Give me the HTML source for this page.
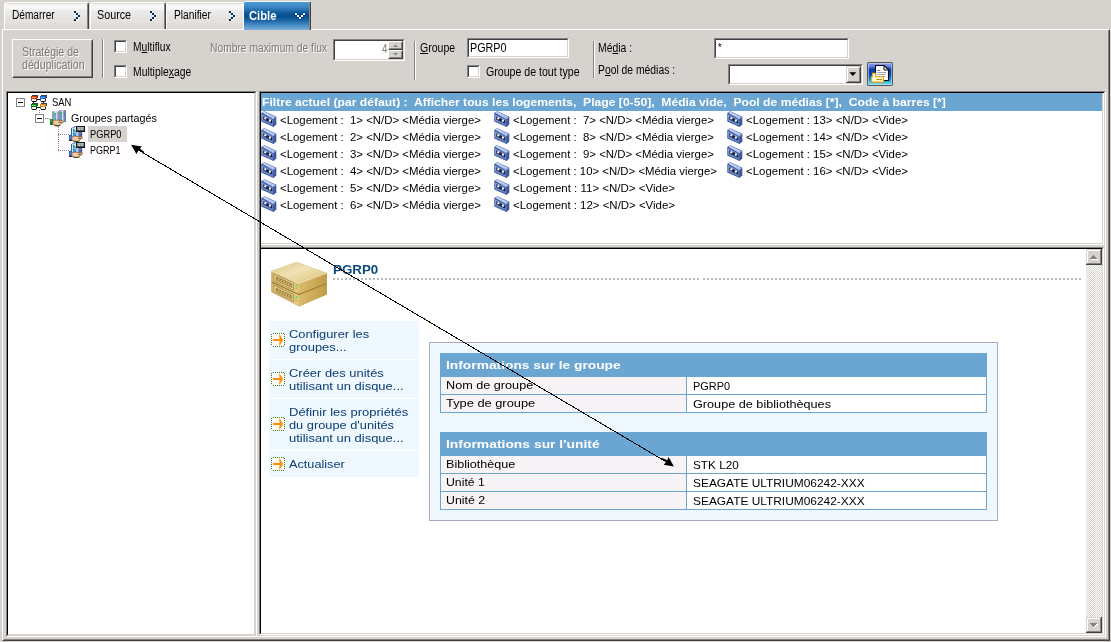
<!DOCTYPE html>
<html>
<head>
<meta charset="utf-8">
<title>Cible</title>
<style>
html,body{margin:0;padding:0;}
body{width:1111px;height:642px;overflow:hidden;background:#d6d3ce;font-family:"Liberation Sans",sans-serif;font-size:11px;color:#000;position:relative;}
#root{position:absolute;left:0;top:0;width:1111px;height:642px;will-change:transform;}
.a{position:absolute;}
.t{position:absolute;white-space:pre;display:block;transform-origin:0 0;}
u{text-decoration:underline;}
.tab{position:absolute;top:2px;height:27px;box-sizing:border-box;border-left:1px solid #fff;border-top:1px solid #fff;border-right:1px solid #424142;border-radius:3px 3px 0 0;background:linear-gradient(#dcd9d5 0,#dcd9d5 3.8%,#f6f6f6 3.9%,#f6f6f6 21%,#f2efed 25%,#ececec 29%,#e8e7e7 45%,#ebe6e3 48%,#e5e4e4 54%,#e6e3df 62%,#e5e2de 75%,#dfdcd7 80%,#dedbd6 95%,#d9d6d1 100%);}
.tab:after{content:"";position:absolute;right:0;top:1px;bottom:0;width:1px;background:#848284;}
.tabl{border-right-color:#fff;}.tabl:after{display:none;}
.sunk{position:absolute;box-sizing:border-box;border:1px solid;border-color:#848284 #fff #fff #848284;}
.sunk>i{position:absolute;left:0;top:0;right:0;bottom:0;border:1px solid;border-color:#424142 #d6d3ce #d6d3ce #424142;background:#fff;display:block;}
.pane>i{border-top-color:#000;border-left-color:#000;}
.cb{position:absolute;width:13px;height:13px;box-sizing:border-box;border:1px solid;border-color:#848284 #fff #fff #848284;}
.cb>i{position:absolute;left:0;top:0;right:0;bottom:0;border:1px solid;border-color:#424142 #d6d3ce #d6d3ce #424142;background:#fff;display:block;}
.vsep{position:absolute;width:1px;background:#848284;border-right:1px solid #fff;}
</style>
</head>
<body>
<div id="root">
<svg width="0" height="0" style="position:absolute">
<defs>
<linearGradient id="gTapeTop" x1="0" y1="0" x2="1" y2="1"><stop offset="0" stop-color="#b9ccf4"/><stop offset="1" stop-color="#98b0e6"/></linearGradient>
<linearGradient id="gTapeFront" x1="0" y1="0" x2="0" y2="1"><stop offset="0" stop-color="#86a2e0"/><stop offset="1" stop-color="#5a7ac0"/></linearGradient>
<linearGradient id="gDiskTop" x1="0" y1="0" x2="1" y2="1"><stop offset="0" stop-color="#dcc88c"/><stop offset=".45" stop-color="#efe2b4"/><stop offset="1" stop-color="#d9bf76"/></linearGradient>
<linearGradient id="gDiskL" x1="0" y1="0" x2="1" y2="0"><stop offset="0" stop-color="#d2b466"/><stop offset="1" stop-color="#e3cb88"/></linearGradient>
<linearGradient id="gDiskR" x1="0" y1="0" x2="1" y2="0"><stop offset="0" stop-color="#d9bb6c"/><stop offset="1" stop-color="#c19c48"/></linearGradient>
<linearGradient id="gBtn" x1="0" y1="0" x2="0" y2="1"><stop offset="0" stop-color="#92a4f4"/><stop offset=".16" stop-color="#6a82e6"/><stop offset=".3" stop-color="#0c3cb0"/><stop offset=".5" stop-color="#0840b2"/><stop offset=".66" stop-color="#1270c8"/><stop offset=".84" stop-color="#30b4e0"/><stop offset="1" stop-color="#90ecfc"/></linearGradient>
<linearGradient id="gTower" x1="0" y1="0" x2="1" y2="0"><stop offset="0" stop-color="#6a7aaa"/><stop offset=".3" stop-color="#a4b0d2"/><stop offset=".55" stop-color="#eef0fc"/><stop offset=".72" stop-color="#b0bcd8"/><stop offset="1" stop-color="#7080b0"/></linearGradient>
<pattern id="chk" width="2" height="2" patternUnits="userSpaceOnUse"><rect width="2" height="2" fill="#fff"/><rect width="1" height="1" fill="#d6d3ce"/><rect x="1" y="1" width="1" height="1" fill="#d6d3ce"/></pattern>
</defs></svg>
<div class="a" style="left:2px;top:29px;width:1108px;height:612px;box-sizing:border-box;border:1px solid;border-color:#fff #424142 #424142 #fff;"></div>
<div class="a" style="left:3px;top:30px;width:1106px;height:610px;box-sizing:border-box;border:1px solid;border-color:#d6d3ce #848284 #848284 #d6d3ce;"></div>
<div class="tab" style="left:4px;width:85px;"></div>
<div class="tab" style="left:90px;width:76px;"></div>
<div class="tab tabl" style="left:166px;width:78px;"></div>
<svg class="a" style="left:74px;top:11px" width="6" height="10" viewBox="0 0 6 10" shape-rendering="crispEdges"><g fill="#fff" opacity=".6"><rect x="0" y="0" width="3" height="3"/><rect x="2" y="2" width="3" height="3"/><rect x="4" y="4" width="2" height="3"/><rect x="2" y="6" width="3" height="3"/><rect x="0" y="8" width="3" height="2"/></g><g fill="#002f60"><rect x="0" y="0" width="2" height="2"/><rect x="2" y="2" width="2" height="2"/><rect x="4" y="4" width="2" height="2"/><rect x="2" y="6" width="2" height="2"/><rect x="0" y="8" width="2" height="2"/></g></svg>
<svg class="a" style="left:150px;top:11px" width="6" height="10" viewBox="0 0 6 10" shape-rendering="crispEdges"><g fill="#fff" opacity=".6"><rect x="0" y="0" width="3" height="3"/><rect x="2" y="2" width="3" height="3"/><rect x="4" y="4" width="2" height="3"/><rect x="2" y="6" width="3" height="3"/><rect x="0" y="8" width="3" height="2"/></g><g fill="#002f60"><rect x="0" y="0" width="2" height="2"/><rect x="2" y="2" width="2" height="2"/><rect x="4" y="4" width="2" height="2"/><rect x="2" y="6" width="2" height="2"/><rect x="0" y="8" width="2" height="2"/></g></svg>
<svg class="a" style="left:229px;top:11px" width="6" height="10" viewBox="0 0 6 10" shape-rendering="crispEdges"><g fill="#fff" opacity=".6"><rect x="0" y="0" width="3" height="3"/><rect x="2" y="2" width="3" height="3"/><rect x="4" y="4" width="2" height="3"/><rect x="2" y="6" width="3" height="3"/><rect x="0" y="8" width="3" height="2"/></g><g fill="#002f60"><rect x="0" y="0" width="2" height="2"/><rect x="2" y="2" width="2" height="2"/><rect x="4" y="4" width="2" height="2"/><rect x="2" y="6" width="2" height="2"/><rect x="0" y="8" width="2" height="2"/></g></svg>
<span class="t" style="left:12.2px;top:8.84px;font-size:12px;line-height:12px;height:12px;color:#000;transform:scaleX(0.8427);">Démarrer</span>
<span class="t" style="left:97.3px;top:8.84px;font-size:12px;line-height:12px;height:12px;color:#000;transform:scaleX(0.8966);">Source</span>
<span class="t" style="left:173.5px;top:8.84px;font-size:12px;line-height:12px;height:12px;color:#000;transform:scaleX(0.8487);">Planifier</span>
<div class="a" style="left:244px;top:1px;width:67px;height:29px;box-sizing:border-box;border-top:1px solid #eef4fa;border-right:1px solid #424142;border-radius:2px 2px 0 0;background:linear-gradient(#4c9cd6 0%,#3a86c4 18%,#0c5494 42%,#07508f 52%,#1c66a6 66%,#4a8fc8 84%,#7fb0da 100%);"><div class="a" style="right:0;top:1px;bottom:0;width:1px;background:#8a8286;"></div></div>
<span class="t" style="left:248.7px;top:10.42px;font-size:12.5px;line-height:12.5px;height:12.5px;color:#fff;font-weight:bold;transform:scaleX(0.8998);">Cible</span>
<svg class="a" style="left:294px;top:12px" width="12" height="8" viewBox="0 0 12 8" shape-rendering="crispEdges"><g fill="#003470" opacity=".55"><rect x="0" y="0" width="4" height="4"/><rect x="2" y="2" width="4" height="4"/><rect x="4" y="4" width="4" height="4"/><rect x="6" y="2" width="4" height="4"/><rect x="8" y="0" width="4" height="4"/></g><g fill="#fff"><rect x="1" y="1" width="2" height="2"/><rect x="3" y="3" width="2" height="2"/><rect x="5" y="5" width="2" height="2"/><rect x="7" y="3" width="2" height="2"/><rect x="9" y="1" width="2" height="2"/></g></svg>
<div class="a" style="left:12px;top:39px;width:81px;height:39px;box-sizing:border-box;border:1px solid;border-color:#fff #424142 #424142 #fff;"></div>
<div class="a" style="left:13px;top:40px;width:79px;height:37px;box-sizing:border-box;border:1px solid;border-color:#d6d3ce #848284 #848284 #d6d3ce;"></div>
<span class="t" style="left:21.6px;top:45.84px;font-size:12px;line-height:12px;height:12px;color:#7b797b;text-shadow:1px 1px 0 #fff;transform:scaleX(0.8792);">Stratégie de</span>
<span class="t" style="left:21.6px;top:58.84px;font-size:12px;line-height:12px;height:12px;color:#7b797b;text-shadow:1px 1px 0 #fff;transform:scaleX(0.8864);">déduplication</span>
<div class="vsep" style="left:102px;top:39px;height:39px;"></div>
<div class="cb" style="left:114px;top:40px;"><i></i></div>
<div class="cb" style="left:114px;top:65px;"><i></i></div>
<span class="t" style="left:132.6px;top:40.84px;font-size:12px;line-height:12px;height:12px;color:#000;transform:scaleX(0.8562);">M<u>u</u>ltiflux</span>
<span class="t" style="left:132.6px;top:65.84px;font-size:12px;line-height:12px;height:12px;color:#000;transform:scaleX(0.8636);">Multiple<u>x</u>age</span>
<span class="t" style="left:209.6px;top:41.84px;font-size:12px;line-height:12px;height:12px;color:#7b797b;text-shadow:1px 1px 0 #fff;transform:scaleX(0.8565);">Nombre maximum de flux</span>
<div class="sunk" style="left:333px;top:39px;width:72px;height:22px;"><i></i></div>
<span class="t" style="left:381.6px;top:42.84px;font-size:12px;line-height:12px;height:12px;color:#7b797b;transform:scaleX(0.8075);">4</span>
<div class="a" style="left:388px;top:41px;width:15px;height:9px;box-sizing:border-box;background:#d6d3ce;border:1px solid;border-color:#fff #424142 #424142 #fff;"></div>
<div class="a" style="left:389px;top:42px;width:13px;height:7px;box-sizing:border-box;border:1px solid;border-color:#d6d3ce #848284 #848284 #d6d3ce;"></div>
<svg class="a" style="left:393px;top:44px" width="6" height="4" viewBox="0 0 6 4"><polygon points="0,3 5,3 2.5,0.4" fill="#848284"/></svg>
<div class="a" style="left:388px;top:50px;width:15px;height:9px;box-sizing:border-box;background:#d6d3ce;border:1px solid;border-color:#fff #424142 #424142 #fff;"></div>
<div class="a" style="left:389px;top:51px;width:13px;height:7px;box-sizing:border-box;border:1px solid;border-color:#d6d3ce #848284 #848284 #d6d3ce;"></div>
<svg class="a" style="left:393px;top:53px" width="6" height="4" viewBox="0 0 6 4"><polygon points="0,0 5,0 2.5,2.6" fill="#848284"/></svg>
<div class="vsep" style="left:414px;top:41px;height:39px;"></div>
<span class="t" style="left:420.4px;top:41.84px;font-size:12px;line-height:12px;height:12px;color:#000;transform:scaleX(0.8765);"><u>G</u>roupe</span>
<div class="sunk" style="left:467px;top:38px;width:102px;height:20px;"><i></i></div>
<span class="t" style="left:470.0px;top:41.84px;font-size:12px;line-height:12px;height:12px;color:#000;transform:scaleX(0.8971);">PGRP0</span>
<div class="cb" style="left:467px;top:65px;"><i></i></div>
<span class="t" style="left:486.0px;top:65.84px;font-size:12px;line-height:12px;height:12px;color:#000;transform:scaleX(0.8824);">Groupe de tout type</span>
<div class="vsep" style="left:593px;top:41px;height:37px;"></div>
<span class="t" style="left:597.5px;top:41.84px;font-size:12px;line-height:12px;height:12px;color:#000;transform:scaleX(0.8660);">Mé<u>d</u>ia :</span>
<span class="t" style="left:597.5px;top:63.84px;font-size:12px;line-height:12px;height:12px;color:#000;transform:scaleX(0.8622);">P<u>o</u>ol de médias :</span>
<div class="sunk" style="left:714px;top:38px;width:135px;height:21px;"><i></i></div>
<span class="t" style="left:717.8px;top:41.69px;font-size:11px;line-height:11px;height:11px;color:#000;transform:scaleX(0.8409);">*</span>
<div class="sunk" style="left:728px;top:64px;width:135px;height:21px;"><i></i></div>
<div class="a" style="left:846px;top:66px;width:15px;height:17px;box-sizing:border-box;background:#d6d3ce;border:1px solid;border-color:#d6d3ce #424142 #424142 #d6d3ce;"></div>
<div class="a" style="left:847px;top:67px;width:13px;height:15px;box-sizing:border-box;border:1px solid;border-color:#fff #848284 #848284 #fff;"></div>
<svg class="a" style="left:849px;top:72px" width="8" height="5" viewBox="0 0 8 5"><polygon points="0.3,0.3 7.3,0.3 3.8,4" fill="#000"/></svg>
<svg class="a" style="left:867px;top:62px;" width="26" height="24" viewBox="0 0 26 24"><rect x="0.5" y="0.5" width="25" height="23" rx="1.6" fill="url(#gBtn)" stroke="#56564e"/><rect x="0" y="0" width="1" height="1" fill="#8a94b8"/><rect x="25" y="0" width="1" height="1" fill="#8a94b8"/><rect x="0" y="23" width="1" height="1" fill="#8a94b8"/><rect x="25" y="23" width="1" height="1" fill="#8a94b8"/><rect x="1.5" y="1.5" width="23" height="21" rx="1" fill="none" stroke="#c8ecff" stroke-width="1" opacity=".55"/><path d="M8.5,3.5 H17.2 L21.5,7.8 V18.5 H8.5 Z" fill="#fff" stroke="#0a0a0a" stroke-width="1.1"/><path d="M17,3.8 V8 H21.2" fill="none" stroke="#0a0a0a" stroke-width="1"/><path d="M10.4,8.5 H13.2" stroke="#70747c" stroke-width="1"/><path d="M10.4,10.5 H18.6 M10.4,12.5 H18.6 M10.4,14.5 H18.6" stroke="#9a9ca4" stroke-width="0.9"/><rect x="17.8" y="10" width="1.2" height="1" fill="#c08a28"/><path d="M5.5,11.2 H8.7 V14.7 H16.5 V20.1 H4.6 V14.7 H5.5 Z" fill="#fff3cc" stroke="#f2a416" stroke-width="1.15" stroke-linejoin="round"/><rect x="6" y="15.8" width="3" height="3.2" fill="#fff"/><rect x="6.6" y="12" width="1" height="2.6" fill="#fff"/><path d="M9.2,17.5 H15" stroke="#c4860c" stroke-width="1"/></svg>
<div class="sunk pane" style="left:6px;top:91px;width:251px;height:546px;"><i style="border-right-width:2px;border-bottom-width:2px;"></i></div>
<div class="a" style="left:257px;top:636px;width:849px;height:1px;background:#fff;"></div>
<div class="a" style="left:1105px;top:92px;width:1px;height:545px;background:#fff;"></div>
<div class="a" style="left:55px;top:126px;width:73px;height:33px;background:#fffbff;"></div>
<div class="a" style="left:88px;top:126px;width:39px;height:16px;background:#d6d3ce;"></div>
<div class="a" style="left:130px;top:143px;width:13px;height:13px;background:#fffbff;"></div>
<div class="a" style="left:39px;top:110px;width:1px;height:3px;background-image:linear-gradient(180deg,#848284 50%,transparent 50%);background-size:1px 2px;"></div>
<div class="a" style="left:45px;top:118px;width:5px;height:1px;background-image:linear-gradient(90deg,#848284 50%,transparent 50%);background-size:2px 1px;"></div>
<div class="a" style="left:58px;top:127px;width:1px;height:24px;background-image:linear-gradient(180deg,#848284 50%,transparent 50%);background-size:1px 2px;"></div>
<div class="a" style="left:58px;top:134px;width:11px;height:1px;background-image:linear-gradient(90deg,#848284 50%,transparent 50%);background-size:2px 1px;"></div>
<div class="a" style="left:58px;top:150px;width:11px;height:1px;background-image:linear-gradient(90deg,#848284 50%,transparent 50%);background-size:2px 1px;"></div>
<svg class="a" style="left:16px;top:98px;shape-rendering:crispEdges;" width="9" height="9" viewBox="0 0 9 9"><rect x="0.5" y="0.5" width="8" height="8" fill="#fff" stroke="#848284"/><rect x="2" y="4" width="5" height="1" fill="#000"/></svg>
<svg class="a" style="left:35px;top:114px;shape-rendering:crispEdges;" width="9" height="9" viewBox="0 0 9 9"><rect x="0.5" y="0.5" width="8" height="8" fill="#fff" stroke="#848284"/><rect x="2" y="4" width="5" height="1" fill="#000"/></svg>
<svg class="a" style="left:31px;top:95px;" width="17" height="16" viewBox="0 0 17 16"><path d="M6,4.5 H9 M6,12.5 H9 M2.6,7 V9 M12.4,7 V9" stroke="#111" stroke-width="1" fill="none"/><rect x="1" y="0" width="6" height="3" fill="#3a4446"/><rect x="0" y="1" width="6" height="3" fill="#dc2c08"/><rect x="1" y="2" width="3.6" height="1" fill="#ffb040"/><rect x="0" y="4" width="6" height="2" fill="#fff"/><rect x="0" y="4" width="1" height="2" fill="#4a5cc4"/><rect x="5" y="4" width="1" height="2" fill="#222"/><rect x="1" y="6" width="4.4" height="1" fill="#111"/><rect x="10" y="0" width="6" height="3" fill="#3a4446"/><rect x="9" y="1" width="6" height="3" fill="#1c5cc8"/><rect x="10" y="2" width="3.6" height="1" fill="#7ca4f0"/><rect x="9" y="4" width="6" height="2" fill="#fff"/><rect x="9" y="4" width="1" height="2" fill="#4a5cc4"/><rect x="14" y="4" width="1" height="2" fill="#222"/><rect x="10" y="6" width="4.4" height="1" fill="#111"/><rect x="1" y="8" width="6" height="3" fill="#3a4446"/><rect x="0" y="9" width="6" height="3" fill="#0a7a12"/><rect x="1" y="10" width="3.6" height="1" fill="#60f060"/><rect x="0" y="12" width="6" height="2" fill="#fff"/><rect x="0" y="12" width="1" height="2" fill="#4a5cc4"/><rect x="5" y="12" width="1" height="2" fill="#222"/><rect x="1" y="14" width="4.4" height="1" fill="#111"/><rect x="10" y="8" width="6" height="3" fill="#3a4446"/><rect x="9" y="9" width="6" height="3" fill="#dc8c14"/><rect x="10" y="10" width="3.6" height="1" fill="#ffd070"/><rect x="9" y="12" width="6" height="2" fill="#fff"/><rect x="9" y="12" width="1" height="2" fill="#4a5cc4"/><rect x="14" y="12" width="1" height="2" fill="#222"/><rect x="10" y="14" width="4.4" height="1" fill="#111"/></svg>
<svg class="a" style="left:50px;top:110px;" width="17" height="17" viewBox="0 0 17 17"><rect x="2.2" y="1.2" width="7" height="10.4" rx="0.9" fill="url(#gTower)"/><rect x="9.1" y="0.1" width="6.9" height="12" rx="0.9" fill="url(#gTower)"/><rect x="13.4" y="0.6" width="2.6" height="11.3" fill="#6474a8" opacity=".8"/><rect x="4" y="3" width="2.2" height="1.3" fill="#18d828"/><rect x="10" y="2" width="2.3" height="1.3" fill="#18d828"/><rect x="4.4" y="4.4" width="1.4" height="0.8" fill="#584878"/><rect x="10.4" y="3.4" width="1.4" height="0.8" fill="#584878"/><rect x="4.7" y="5.4" width="1" height="5" fill="#2a9ab4"/><rect x="10.7" y="4.6" width="1" height="6.6" fill="#2a9ab4"/><rect x="0" y="9" width="2.9" height="6" fill="#0e7a18"/><rect x="0.3" y="9.2" width="1.8" height="2.4" fill="#22c030"/><path d="M2.9,10.6 C5,9.8 8,10.2 11,10.4 C12.6,10.6 13.4,11.2 13.2,12.2 C12.6,13 11.6,13 11,13.6 C10.4,15 8.6,16 6.4,15.6 C4.8,15.2 3.8,14.6 2.9,14.4 Z" fill="#f6d0b4" stroke="#8a5a18" stroke-width="0.8"/><path d="M4.4,15.2 C6.2,16.2 8.8,16.2 10.2,15" stroke="#111" stroke-width="0.9" fill="none"/><path d="M8.6,12.2 H11.6" stroke="#3a2a10" stroke-width="0.9"/><path d="M5.4,14.2 C6.8,14.8 8.4,14.6 9.4,14" stroke="#e0d848" stroke-width="0.8" fill="none"/><path d="M4,12.6 C5,13.4 6.6,13.4 7.6,13" stroke="#f8a0a8" stroke-width="0.9" fill="none"/></svg>
<svg class="a" style="left:69px;top:126px;" width="17" height="16" viewBox="0 0 17 16"><polygon points="2,2.2 6.2,0 7,0.9 3.3,2.8 3.3,10.6 2,10.6" fill="#1a58c4"/><rect x="3.3" y="1.6" width="4.4" height="8.6" fill="#dcecfc"/><rect x="4" y="2.8" width="1.5" height="1.2" fill="#18c828"/><rect x="4.4" y="4" width="1.3" height="0.9" fill="#111"/><rect x="4" y="5.2" width="3.6" height="4.8" fill="#3a92b2"/><rect x="4.6" y="6" width="2.6" height="0.8" fill="#9cd4ec"/><rect x="4.6" y="7.6" width="2.6" height="0.8" fill="#6cb4d4"/><rect x="7.6" y="6.2" width="1.9" height="4.4" fill="#a8dcf8"/><rect x="9.4" y="6.2" width="3.8" height="6.6" fill="#484e98"/><rect x="10.4" y="6.6" width="1" height="6" fill="#7a84c4"/><rect x="0" y="9" width="2.9" height="5.8" fill="#1a5ac6"/><rect x="0.6" y="9.8" width="1.5" height="3.2" fill="#3e8ae6"/><rect x="0" y="14" width="2.9" height="0.9" fill="#0a1230"/><path d="M2.9,10.8 C5,10 8,10.4 11,10.6 C12.6,10.8 13.6,11.4 13.4,12.2 C12.8,13 11.8,13 11.2,13.4 C10.6,14.6 8.8,15.4 6.4,15.2 C4.8,15 3.8,14.6 2.9,14.4 Z" fill="#f8d4b8" stroke="#8a5612" stroke-width="0.8"/><path d="M4.2,15 C6,15.7 9,15.7 10.6,14.6" stroke="#151515" stroke-width="0.8" fill="none"/><path d="M8.8,12.2 H11.8" stroke="#3a2a10" stroke-width="0.9"/><path d="M5.2,14.2 C6.6,14.7 8.4,14.6 9.6,14" stroke="#e8e040" stroke-width="0.8" fill="none"/><path d="M4,12.6 C5,13.3 6.6,13.3 7.6,13" stroke="#f8a0a8" stroke-width="0.9" fill="none"/><rect x="7" y="0" width="9" height="6" fill="#0e1414"/><rect x="8" y="1" width="7" height="4" fill="#868c8c"/><rect x="8" y="1" width="7" height="1" fill="#aab2b2"/><rect x="8" y="4" width="7" height="1" fill="#4a5470"/><rect x="9.3" y="2.6" width="1.6" height="1" fill="#f4f4f4"/><rect x="12" y="2.6" width="1.6" height="1" fill="#f4f4f4"/></svg>
<svg class="a" style="left:69px;top:142px;" width="17" height="16" viewBox="0 0 17 16"><polygon points="2,2.2 6.2,0 7,0.9 3.3,2.8 3.3,10.6 2,10.6" fill="#1a58c4"/><rect x="3.3" y="1.6" width="4.4" height="8.6" fill="#dcecfc"/><rect x="4" y="2.8" width="1.5" height="1.2" fill="#18c828"/><rect x="4.4" y="4" width="1.3" height="0.9" fill="#111"/><rect x="4" y="5.2" width="3.6" height="4.8" fill="#3a92b2"/><rect x="4.6" y="6" width="2.6" height="0.8" fill="#9cd4ec"/><rect x="4.6" y="7.6" width="2.6" height="0.8" fill="#6cb4d4"/><rect x="7.6" y="6.2" width="1.9" height="4.4" fill="#a8dcf8"/><rect x="9.4" y="6.2" width="3.8" height="6.6" fill="#484e98"/><rect x="10.4" y="6.6" width="1" height="6" fill="#7a84c4"/><rect x="0" y="9" width="2.9" height="5.8" fill="#1a5ac6"/><rect x="0.6" y="9.8" width="1.5" height="3.2" fill="#3e8ae6"/><rect x="0" y="14" width="2.9" height="0.9" fill="#0a1230"/><path d="M2.9,10.8 C5,10 8,10.4 11,10.6 C12.6,10.8 13.6,11.4 13.4,12.2 C12.8,13 11.8,13 11.2,13.4 C10.6,14.6 8.8,15.4 6.4,15.2 C4.8,15 3.8,14.6 2.9,14.4 Z" fill="#f8d4b8" stroke="#8a5612" stroke-width="0.8"/><path d="M4.2,15 C6,15.7 9,15.7 10.6,14.6" stroke="#151515" stroke-width="0.8" fill="none"/><path d="M8.8,12.2 H11.8" stroke="#3a2a10" stroke-width="0.9"/><path d="M5.2,14.2 C6.6,14.7 8.4,14.6 9.6,14" stroke="#e8e040" stroke-width="0.8" fill="none"/><path d="M4,12.6 C5,13.3 6.6,13.3 7.6,13" stroke="#f8a0a8" stroke-width="0.9" fill="none"/><rect x="7" y="0" width="9" height="6" fill="#0e1414"/><rect x="8" y="1" width="7" height="4" fill="#868c8c"/><rect x="8" y="1" width="7" height="1" fill="#aab2b2"/><rect x="8" y="4" width="7" height="1" fill="#4a5470"/><rect x="9.3" y="2.6" width="1.6" height="1" fill="#f4f4f4"/><rect x="12" y="2.6" width="1.6" height="1" fill="#f4f4f4"/></svg>
<span class="t" style="left:51.8px;top:96.69px;font-size:11px;line-height:11px;height:11px;color:#000;transform:scaleX(0.8575);">SAN</span>
<span class="t" style="left:70.5px;top:112.69px;font-size:11px;line-height:11px;height:11px;color:#000;transform:scaleX(0.9743);">Groupes partagés</span>
<span class="t" style="left:89.6px;top:128.69px;font-size:11px;line-height:11px;height:11px;color:#000;transform:scaleX(0.8446);">PGRP0</span>
<span class="t" style="left:89.6px;top:144.69px;font-size:11px;line-height:11px;height:11px;color:#000;transform:scaleX(0.8204);">PGRP1</span>
<div class="sunk pane" style="left:259px;top:91px;width:845px;height:154px;"><i></i></div>
<div class="a" style="left:261px;top:93px;width:841px;height:18px;background:#6ba5d1;"></div>
<div class="a" style="left:1101px;top:91px;width:4px;height:1px;background:#848284;"></div><div class="a" style="left:1101px;top:92px;width:3px;height:1px;background:#000;"></div>
<span class="t" style="left:261.9px;top:96.69px;font-size:11px;line-height:11px;height:11px;color:#fff;font-weight:bold;transform:scaleX(1.1029);">Filtre actuel (par défaut) :  Afficher tous les logements,  Plage [0-50],  Média vide,  Pool de médias [*],  Code à barres [*]</span>
<svg class="a" style="left:261px;top:111px;" width="16" height="16" viewBox="0 0 16 16"><polygon points="0.9,1.6 3.3,0.3 15.3,5.8 15.3,13.2 12.6,15.9 0.3,10.4 0.3,2.6" fill="#36508e"/><polygon points="1,1.8 3.3,0.5 15,5.9 12.4,8.6" fill="url(#gTapeTop)"/><polygon points="0.7,3 12.3,8.9 12.3,15.2 0.7,9.8" fill="url(#gTapeFront)"/><polygon points="12.9,8.8 15,6.6 15,13 12.9,15.1" fill="#3f5a9c"/><polygon points="2.3,5.2 11.2,9.4 11.2,12.6 2.3,8.5" fill="#1a2140"/><ellipse cx="4.3" cy="7.3" rx="1.1" ry="1.3" fill="#eef2fc"/><ellipse cx="8.9" cy="9.6" rx="1.1" ry="1.3" fill="#eef2fc"/><path d="M3.4,1.9 L4.4,2.4 M5.9,3.1 L6.9,3.6 M8.4,4.3 L9.4,4.8 M10.9,5.5 L11.9,6" stroke="#f0f5ff" stroke-width="1"/></svg>
<span class="t" style="left:279.6px;top:114.69px;font-size:11px;line-height:11px;height:11px;color:#000;transform:scaleX(1.0364);">&lt;Logement :  1&gt; &lt;N/D&gt; &lt;Média vierge&gt;</span>
<svg class="a" style="left:261px;top:128px;" width="16" height="16" viewBox="0 0 16 16"><polygon points="0.9,1.6 3.3,0.3 15.3,5.8 15.3,13.2 12.6,15.9 0.3,10.4 0.3,2.6" fill="#36508e"/><polygon points="1,1.8 3.3,0.5 15,5.9 12.4,8.6" fill="url(#gTapeTop)"/><polygon points="0.7,3 12.3,8.9 12.3,15.2 0.7,9.8" fill="url(#gTapeFront)"/><polygon points="12.9,8.8 15,6.6 15,13 12.9,15.1" fill="#3f5a9c"/><polygon points="2.3,5.2 11.2,9.4 11.2,12.6 2.3,8.5" fill="#1a2140"/><ellipse cx="4.3" cy="7.3" rx="1.1" ry="1.3" fill="#eef2fc"/><ellipse cx="8.9" cy="9.6" rx="1.1" ry="1.3" fill="#eef2fc"/><path d="M3.4,1.9 L4.4,2.4 M5.9,3.1 L6.9,3.6 M8.4,4.3 L9.4,4.8 M10.9,5.5 L11.9,6" stroke="#f0f5ff" stroke-width="1"/></svg>
<span class="t" style="left:279.6px;top:131.69px;font-size:11px;line-height:11px;height:11px;color:#000;transform:scaleX(1.0364);">&lt;Logement :  2&gt; &lt;N/D&gt; &lt;Média vierge&gt;</span>
<svg class="a" style="left:261px;top:145px;" width="16" height="16" viewBox="0 0 16 16"><polygon points="0.9,1.6 3.3,0.3 15.3,5.8 15.3,13.2 12.6,15.9 0.3,10.4 0.3,2.6" fill="#36508e"/><polygon points="1,1.8 3.3,0.5 15,5.9 12.4,8.6" fill="url(#gTapeTop)"/><polygon points="0.7,3 12.3,8.9 12.3,15.2 0.7,9.8" fill="url(#gTapeFront)"/><polygon points="12.9,8.8 15,6.6 15,13 12.9,15.1" fill="#3f5a9c"/><polygon points="2.3,5.2 11.2,9.4 11.2,12.6 2.3,8.5" fill="#1a2140"/><ellipse cx="4.3" cy="7.3" rx="1.1" ry="1.3" fill="#eef2fc"/><ellipse cx="8.9" cy="9.6" rx="1.1" ry="1.3" fill="#eef2fc"/><path d="M3.4,1.9 L4.4,2.4 M5.9,3.1 L6.9,3.6 M8.4,4.3 L9.4,4.8 M10.9,5.5 L11.9,6" stroke="#f0f5ff" stroke-width="1"/></svg>
<span class="t" style="left:279.6px;top:148.69px;font-size:11px;line-height:11px;height:11px;color:#000;transform:scaleX(1.0364);">&lt;Logement :  3&gt; &lt;N/D&gt; &lt;Média vierge&gt;</span>
<svg class="a" style="left:261px;top:162px;" width="16" height="16" viewBox="0 0 16 16"><polygon points="0.9,1.6 3.3,0.3 15.3,5.8 15.3,13.2 12.6,15.9 0.3,10.4 0.3,2.6" fill="#36508e"/><polygon points="1,1.8 3.3,0.5 15,5.9 12.4,8.6" fill="url(#gTapeTop)"/><polygon points="0.7,3 12.3,8.9 12.3,15.2 0.7,9.8" fill="url(#gTapeFront)"/><polygon points="12.9,8.8 15,6.6 15,13 12.9,15.1" fill="#3f5a9c"/><polygon points="2.3,5.2 11.2,9.4 11.2,12.6 2.3,8.5" fill="#1a2140"/><ellipse cx="4.3" cy="7.3" rx="1.1" ry="1.3" fill="#eef2fc"/><ellipse cx="8.9" cy="9.6" rx="1.1" ry="1.3" fill="#eef2fc"/><path d="M3.4,1.9 L4.4,2.4 M5.9,3.1 L6.9,3.6 M8.4,4.3 L9.4,4.8 M10.9,5.5 L11.9,6" stroke="#f0f5ff" stroke-width="1"/></svg>
<span class="t" style="left:279.6px;top:165.69px;font-size:11px;line-height:11px;height:11px;color:#000;transform:scaleX(1.0364);">&lt;Logement :  4&gt; &lt;N/D&gt; &lt;Média vierge&gt;</span>
<svg class="a" style="left:261px;top:179px;" width="16" height="16" viewBox="0 0 16 16"><polygon points="0.9,1.6 3.3,0.3 15.3,5.8 15.3,13.2 12.6,15.9 0.3,10.4 0.3,2.6" fill="#36508e"/><polygon points="1,1.8 3.3,0.5 15,5.9 12.4,8.6" fill="url(#gTapeTop)"/><polygon points="0.7,3 12.3,8.9 12.3,15.2 0.7,9.8" fill="url(#gTapeFront)"/><polygon points="12.9,8.8 15,6.6 15,13 12.9,15.1" fill="#3f5a9c"/><polygon points="2.3,5.2 11.2,9.4 11.2,12.6 2.3,8.5" fill="#1a2140"/><ellipse cx="4.3" cy="7.3" rx="1.1" ry="1.3" fill="#eef2fc"/><ellipse cx="8.9" cy="9.6" rx="1.1" ry="1.3" fill="#eef2fc"/><path d="M3.4,1.9 L4.4,2.4 M5.9,3.1 L6.9,3.6 M8.4,4.3 L9.4,4.8 M10.9,5.5 L11.9,6" stroke="#f0f5ff" stroke-width="1"/></svg>
<span class="t" style="left:279.6px;top:182.69px;font-size:11px;line-height:11px;height:11px;color:#000;transform:scaleX(1.0364);">&lt;Logement :  5&gt; &lt;N/D&gt; &lt;Média vierge&gt;</span>
<svg class="a" style="left:261px;top:196px;" width="16" height="16" viewBox="0 0 16 16"><polygon points="0.9,1.6 3.3,0.3 15.3,5.8 15.3,13.2 12.6,15.9 0.3,10.4 0.3,2.6" fill="#36508e"/><polygon points="1,1.8 3.3,0.5 15,5.9 12.4,8.6" fill="url(#gTapeTop)"/><polygon points="0.7,3 12.3,8.9 12.3,15.2 0.7,9.8" fill="url(#gTapeFront)"/><polygon points="12.9,8.8 15,6.6 15,13 12.9,15.1" fill="#3f5a9c"/><polygon points="2.3,5.2 11.2,9.4 11.2,12.6 2.3,8.5" fill="#1a2140"/><ellipse cx="4.3" cy="7.3" rx="1.1" ry="1.3" fill="#eef2fc"/><ellipse cx="8.9" cy="9.6" rx="1.1" ry="1.3" fill="#eef2fc"/><path d="M3.4,1.9 L4.4,2.4 M5.9,3.1 L6.9,3.6 M8.4,4.3 L9.4,4.8 M10.9,5.5 L11.9,6" stroke="#f0f5ff" stroke-width="1"/></svg>
<span class="t" style="left:279.6px;top:199.69px;font-size:11px;line-height:11px;height:11px;color:#000;transform:scaleX(1.0364);">&lt;Logement :  6&gt; &lt;N/D&gt; &lt;Média vierge&gt;</span>
<svg class="a" style="left:494px;top:111px;" width="16" height="16" viewBox="0 0 16 16"><polygon points="0.9,1.6 3.3,0.3 15.3,5.8 15.3,13.2 12.6,15.9 0.3,10.4 0.3,2.6" fill="#36508e"/><polygon points="1,1.8 3.3,0.5 15,5.9 12.4,8.6" fill="url(#gTapeTop)"/><polygon points="0.7,3 12.3,8.9 12.3,15.2 0.7,9.8" fill="url(#gTapeFront)"/><polygon points="12.9,8.8 15,6.6 15,13 12.9,15.1" fill="#3f5a9c"/><polygon points="2.3,5.2 11.2,9.4 11.2,12.6 2.3,8.5" fill="#1a2140"/><ellipse cx="4.3" cy="7.3" rx="1.1" ry="1.3" fill="#eef2fc"/><ellipse cx="8.9" cy="9.6" rx="1.1" ry="1.3" fill="#eef2fc"/><path d="M3.4,1.9 L4.4,2.4 M5.9,3.1 L6.9,3.6 M8.4,4.3 L9.4,4.8 M10.9,5.5 L11.9,6" stroke="#f0f5ff" stroke-width="1"/></svg>
<span class="t" style="left:513.0px;top:114.69px;font-size:11px;line-height:11px;height:11px;color:#000;transform:scaleX(1.0364);">&lt;Logement :  7&gt; &lt;N/D&gt; &lt;Média vierge&gt;</span>
<svg class="a" style="left:494px;top:128px;" width="16" height="16" viewBox="0 0 16 16"><polygon points="0.9,1.6 3.3,0.3 15.3,5.8 15.3,13.2 12.6,15.9 0.3,10.4 0.3,2.6" fill="#36508e"/><polygon points="1,1.8 3.3,0.5 15,5.9 12.4,8.6" fill="url(#gTapeTop)"/><polygon points="0.7,3 12.3,8.9 12.3,15.2 0.7,9.8" fill="url(#gTapeFront)"/><polygon points="12.9,8.8 15,6.6 15,13 12.9,15.1" fill="#3f5a9c"/><polygon points="2.3,5.2 11.2,9.4 11.2,12.6 2.3,8.5" fill="#1a2140"/><ellipse cx="4.3" cy="7.3" rx="1.1" ry="1.3" fill="#eef2fc"/><ellipse cx="8.9" cy="9.6" rx="1.1" ry="1.3" fill="#eef2fc"/><path d="M3.4,1.9 L4.4,2.4 M5.9,3.1 L6.9,3.6 M8.4,4.3 L9.4,4.8 M10.9,5.5 L11.9,6" stroke="#f0f5ff" stroke-width="1"/></svg>
<span class="t" style="left:513.0px;top:131.69px;font-size:11px;line-height:11px;height:11px;color:#000;transform:scaleX(1.0364);">&lt;Logement :  8&gt; &lt;N/D&gt; &lt;Média vierge&gt;</span>
<svg class="a" style="left:494px;top:145px;" width="16" height="16" viewBox="0 0 16 16"><polygon points="0.9,1.6 3.3,0.3 15.3,5.8 15.3,13.2 12.6,15.9 0.3,10.4 0.3,2.6" fill="#36508e"/><polygon points="1,1.8 3.3,0.5 15,5.9 12.4,8.6" fill="url(#gTapeTop)"/><polygon points="0.7,3 12.3,8.9 12.3,15.2 0.7,9.8" fill="url(#gTapeFront)"/><polygon points="12.9,8.8 15,6.6 15,13 12.9,15.1" fill="#3f5a9c"/><polygon points="2.3,5.2 11.2,9.4 11.2,12.6 2.3,8.5" fill="#1a2140"/><ellipse cx="4.3" cy="7.3" rx="1.1" ry="1.3" fill="#eef2fc"/><ellipse cx="8.9" cy="9.6" rx="1.1" ry="1.3" fill="#eef2fc"/><path d="M3.4,1.9 L4.4,2.4 M5.9,3.1 L6.9,3.6 M8.4,4.3 L9.4,4.8 M10.9,5.5 L11.9,6" stroke="#f0f5ff" stroke-width="1"/></svg>
<span class="t" style="left:513.0px;top:148.69px;font-size:11px;line-height:11px;height:11px;color:#000;transform:scaleX(1.0364);">&lt;Logement :  9&gt; &lt;N/D&gt; &lt;Média vierge&gt;</span>
<svg class="a" style="left:494px;top:162px;" width="16" height="16" viewBox="0 0 16 16"><polygon points="0.9,1.6 3.3,0.3 15.3,5.8 15.3,13.2 12.6,15.9 0.3,10.4 0.3,2.6" fill="#36508e"/><polygon points="1,1.8 3.3,0.5 15,5.9 12.4,8.6" fill="url(#gTapeTop)"/><polygon points="0.7,3 12.3,8.9 12.3,15.2 0.7,9.8" fill="url(#gTapeFront)"/><polygon points="12.9,8.8 15,6.6 15,13 12.9,15.1" fill="#3f5a9c"/><polygon points="2.3,5.2 11.2,9.4 11.2,12.6 2.3,8.5" fill="#1a2140"/><ellipse cx="4.3" cy="7.3" rx="1.1" ry="1.3" fill="#eef2fc"/><ellipse cx="8.9" cy="9.6" rx="1.1" ry="1.3" fill="#eef2fc"/><path d="M3.4,1.9 L4.4,2.4 M5.9,3.1 L6.9,3.6 M8.4,4.3 L9.4,4.8 M10.9,5.5 L11.9,6" stroke="#f0f5ff" stroke-width="1"/></svg>
<span class="t" style="left:513.0px;top:165.69px;font-size:11px;line-height:11px;height:11px;color:#000;transform:scaleX(1.0355);">&lt;Logement : 10&gt; &lt;N/D&gt; &lt;Média vierge&gt;</span>
<svg class="a" style="left:494px;top:179px;" width="16" height="16" viewBox="0 0 16 16"><polygon points="0.9,1.6 3.3,0.3 15.3,5.8 15.3,13.2 12.6,15.9 0.3,10.4 0.3,2.6" fill="#36508e"/><polygon points="1,1.8 3.3,0.5 15,5.9 12.4,8.6" fill="url(#gTapeTop)"/><polygon points="0.7,3 12.3,8.9 12.3,15.2 0.7,9.8" fill="url(#gTapeFront)"/><polygon points="12.9,8.8 15,6.6 15,13 12.9,15.1" fill="#3f5a9c"/><polygon points="2.3,5.2 11.2,9.4 11.2,12.6 2.3,8.5" fill="#1a2140"/><ellipse cx="4.3" cy="7.3" rx="1.1" ry="1.3" fill="#eef2fc"/><ellipse cx="8.9" cy="9.6" rx="1.1" ry="1.3" fill="#eef2fc"/><path d="M3.4,1.9 L4.4,2.4 M5.9,3.1 L6.9,3.6 M8.4,4.3 L9.4,4.8 M10.9,5.5 L11.9,6" stroke="#f0f5ff" stroke-width="1"/></svg>
<span class="t" style="left:513.0px;top:182.69px;font-size:11px;line-height:11px;height:11px;color:#000;transform:scaleX(1.0456);">&lt;Logement : 11&gt; &lt;N/D&gt; &lt;Vide&gt;</span>
<svg class="a" style="left:494px;top:196px;" width="16" height="16" viewBox="0 0 16 16"><polygon points="0.9,1.6 3.3,0.3 15.3,5.8 15.3,13.2 12.6,15.9 0.3,10.4 0.3,2.6" fill="#36508e"/><polygon points="1,1.8 3.3,0.5 15,5.9 12.4,8.6" fill="url(#gTapeTop)"/><polygon points="0.7,3 12.3,8.9 12.3,15.2 0.7,9.8" fill="url(#gTapeFront)"/><polygon points="12.9,8.8 15,6.6 15,13 12.9,15.1" fill="#3f5a9c"/><polygon points="2.3,5.2 11.2,9.4 11.2,12.6 2.3,8.5" fill="#1a2140"/><ellipse cx="4.3" cy="7.3" rx="1.1" ry="1.3" fill="#eef2fc"/><ellipse cx="8.9" cy="9.6" rx="1.1" ry="1.3" fill="#eef2fc"/><path d="M3.4,1.9 L4.4,2.4 M5.9,3.1 L6.9,3.6 M8.4,4.3 L9.4,4.8 M10.9,5.5 L11.9,6" stroke="#f0f5ff" stroke-width="1"/></svg>
<span class="t" style="left:513.0px;top:199.69px;font-size:11px;line-height:11px;height:11px;color:#000;transform:scaleX(1.0401);">&lt;Logement : 12&gt; &lt;N/D&gt; &lt;Vide&gt;</span>
<svg class="a" style="left:727px;top:111px;" width="16" height="16" viewBox="0 0 16 16"><polygon points="0.9,1.6 3.3,0.3 15.3,5.8 15.3,13.2 12.6,15.9 0.3,10.4 0.3,2.6" fill="#36508e"/><polygon points="1,1.8 3.3,0.5 15,5.9 12.4,8.6" fill="url(#gTapeTop)"/><polygon points="0.7,3 12.3,8.9 12.3,15.2 0.7,9.8" fill="url(#gTapeFront)"/><polygon points="12.9,8.8 15,6.6 15,13 12.9,15.1" fill="#3f5a9c"/><polygon points="2.3,5.2 11.2,9.4 11.2,12.6 2.3,8.5" fill="#1a2140"/><ellipse cx="4.3" cy="7.3" rx="1.1" ry="1.3" fill="#eef2fc"/><ellipse cx="8.9" cy="9.6" rx="1.1" ry="1.3" fill="#eef2fc"/><path d="M3.4,1.9 L4.4,2.4 M5.9,3.1 L6.9,3.6 M8.4,4.3 L9.4,4.8 M10.9,5.5 L11.9,6" stroke="#f0f5ff" stroke-width="1"/></svg>
<span class="t" style="left:746.1px;top:114.69px;font-size:11px;line-height:11px;height:11px;color:#000;transform:scaleX(1.0401);">&lt;Logement : 13&gt; &lt;N/D&gt; &lt;Vide&gt;</span>
<svg class="a" style="left:727px;top:128px;" width="16" height="16" viewBox="0 0 16 16"><polygon points="0.9,1.6 3.3,0.3 15.3,5.8 15.3,13.2 12.6,15.9 0.3,10.4 0.3,2.6" fill="#36508e"/><polygon points="1,1.8 3.3,0.5 15,5.9 12.4,8.6" fill="url(#gTapeTop)"/><polygon points="0.7,3 12.3,8.9 12.3,15.2 0.7,9.8" fill="url(#gTapeFront)"/><polygon points="12.9,8.8 15,6.6 15,13 12.9,15.1" fill="#3f5a9c"/><polygon points="2.3,5.2 11.2,9.4 11.2,12.6 2.3,8.5" fill="#1a2140"/><ellipse cx="4.3" cy="7.3" rx="1.1" ry="1.3" fill="#eef2fc"/><ellipse cx="8.9" cy="9.6" rx="1.1" ry="1.3" fill="#eef2fc"/><path d="M3.4,1.9 L4.4,2.4 M5.9,3.1 L6.9,3.6 M8.4,4.3 L9.4,4.8 M10.9,5.5 L11.9,6" stroke="#f0f5ff" stroke-width="1"/></svg>
<span class="t" style="left:746.1px;top:131.69px;font-size:11px;line-height:11px;height:11px;color:#000;transform:scaleX(1.0401);">&lt;Logement : 14&gt; &lt;N/D&gt; &lt;Vide&gt;</span>
<svg class="a" style="left:727px;top:145px;" width="16" height="16" viewBox="0 0 16 16"><polygon points="0.9,1.6 3.3,0.3 15.3,5.8 15.3,13.2 12.6,15.9 0.3,10.4 0.3,2.6" fill="#36508e"/><polygon points="1,1.8 3.3,0.5 15,5.9 12.4,8.6" fill="url(#gTapeTop)"/><polygon points="0.7,3 12.3,8.9 12.3,15.2 0.7,9.8" fill="url(#gTapeFront)"/><polygon points="12.9,8.8 15,6.6 15,13 12.9,15.1" fill="#3f5a9c"/><polygon points="2.3,5.2 11.2,9.4 11.2,12.6 2.3,8.5" fill="#1a2140"/><ellipse cx="4.3" cy="7.3" rx="1.1" ry="1.3" fill="#eef2fc"/><ellipse cx="8.9" cy="9.6" rx="1.1" ry="1.3" fill="#eef2fc"/><path d="M3.4,1.9 L4.4,2.4 M5.9,3.1 L6.9,3.6 M8.4,4.3 L9.4,4.8 M10.9,5.5 L11.9,6" stroke="#f0f5ff" stroke-width="1"/></svg>
<span class="t" style="left:746.1px;top:148.69px;font-size:11px;line-height:11px;height:11px;color:#000;transform:scaleX(1.0401);">&lt;Logement : 15&gt; &lt;N/D&gt; &lt;Vide&gt;</span>
<svg class="a" style="left:727px;top:162px;" width="16" height="16" viewBox="0 0 16 16"><polygon points="0.9,1.6 3.3,0.3 15.3,5.8 15.3,13.2 12.6,15.9 0.3,10.4 0.3,2.6" fill="#36508e"/><polygon points="1,1.8 3.3,0.5 15,5.9 12.4,8.6" fill="url(#gTapeTop)"/><polygon points="0.7,3 12.3,8.9 12.3,15.2 0.7,9.8" fill="url(#gTapeFront)"/><polygon points="12.9,8.8 15,6.6 15,13 12.9,15.1" fill="#3f5a9c"/><polygon points="2.3,5.2 11.2,9.4 11.2,12.6 2.3,8.5" fill="#1a2140"/><ellipse cx="4.3" cy="7.3" rx="1.1" ry="1.3" fill="#eef2fc"/><ellipse cx="8.9" cy="9.6" rx="1.1" ry="1.3" fill="#eef2fc"/><path d="M3.4,1.9 L4.4,2.4 M5.9,3.1 L6.9,3.6 M8.4,4.3 L9.4,4.8 M10.9,5.5 L11.9,6" stroke="#f0f5ff" stroke-width="1"/></svg>
<span class="t" style="left:746.1px;top:165.69px;font-size:11px;line-height:11px;height:11px;color:#000;transform:scaleX(1.0401);">&lt;Logement : 16&gt; &lt;N/D&gt; &lt;Vide&gt;</span>
<div class="sunk pane" style="left:259px;top:247px;width:845px;height:388px;"><i></i></div>
<div class="a" style="left:259px;top:243px;width:1px;height:5px;background:#848284;"></div><div class="a" style="left:260px;top:243px;width:1px;height:5px;background:#000;"></div>
<svg class="a" style="left:1086px;top:249px" width="16" height="384" viewBox="0 0 16 384" shape-rendering="crispEdges"><rect width="16" height="384" fill="url(#chk)"/><g transform="translate(0,0)"><rect width="16" height="16" fill="#d6d3ce"/><path d="M0.5,15 V0.5 H15" stroke="#d6d3ce" fill="none"/><path d="M1.5,14 V1.5 H14" stroke="#fff" fill="none"/><path d="M15.5,0 V15.5 H0" stroke="#424142" fill="none"/><path d="M14.5,1 V14.5 H1" stroke="#848284" fill="none"/><rect x="8" y="7" width="1" height="1" fill="#fff"/><rect x="7" y="8" width="3" height="1" fill="#fff"/><rect x="6" y="9" width="5" height="1" fill="#fff"/><rect x="5" y="10" width="7" height="1" fill="#fff"/><rect x="7" y="6" width="1" height="1" fill="#848284"/><rect x="6" y="7" width="3" height="1" fill="#848284"/><rect x="5" y="8" width="5" height="1" fill="#848284"/><rect x="4" y="9" width="7" height="1" fill="#848284"/></g><g transform="translate(0,368)"><rect width="16" height="16" fill="#d6d3ce"/><path d="M0.5,15 V0.5 H15" stroke="#d6d3ce" fill="none"/><path d="M1.5,14 V1.5 H14" stroke="#fff" fill="none"/><path d="M15.5,0 V15.5 H0" stroke="#424142" fill="none"/><path d="M14.5,1 V14.5 H1" stroke="#848284" fill="none"/><rect x="5" y="7" width="7" height="1" fill="#fff"/><rect x="6" y="8" width="5" height="1" fill="#fff"/><rect x="7" y="9" width="3" height="1" fill="#fff"/><rect x="8" y="10" width="1" height="1" fill="#fff"/><rect x="4" y="6" width="7" height="1" fill="#848284"/><rect x="5" y="7" width="5" height="1" fill="#848284"/><rect x="6" y="8" width="3" height="1" fill="#848284"/><rect x="7" y="9" width="1" height="1" fill="#848284"/></g></svg>
<svg class="a" style="left:270px;top:261px;" width="58" height="46" viewBox="0 0 58 46"><polygon points="1.4,10 26.7,1.1 56.8,12 56.8,33.6 29,45.4 1.4,31" fill="#c7a552"/><polygon points="1.4,9.8 26.7,1.1 56.8,12 28.9,22" fill="url(#gDiskTop)"/><polygon points="1.4,10 28.9,22.2 28.9,33 1.4,20.4" fill="url(#gDiskL)"/><polygon points="1.4,21.4 28.9,34 28.9,45.3 1.4,31" fill="url(#gDiskL)"/><polygon points="28.9,22.2 56.8,12 56.8,22 28.9,33" fill="url(#gDiskR)"/><polygon points="28.9,34 56.8,23 56.8,33.6 28.9,45.3" fill="url(#gDiskR)"/><path d="M1.4,20.9 L28.9,33.5 L56.8,22.5" stroke="#9a7c30" stroke-width="1.1" fill="none"/><polygon points="4,13 23.6,21.8 23.6,29 4,20" fill="#f0e0b0" stroke="#a08840" stroke-width="0.8"/><polygon points="6,15.6 22,22.8 22,26.6 6,19.4" fill="#d8b468" stroke="#8c7430" stroke-width="0.7"/><polygon points="4,24.4 23.6,33.4 23.6,40.6 4,31.2" fill="#f0e0b0" stroke="#a08840" stroke-width="0.8"/><polygon points="6,27 22,34.4 22,38.2 6,30.8" fill="#d8b468" stroke="#8c7430" stroke-width="0.7"/><path d="M7,17.6 L21.5,24.2 M7,29 L21.5,35.8" stroke="#7c6828" stroke-width="2.2" stroke-dasharray="1.2 1.6" fill="none" opacity=".75"/><rect x="25.6" y="23.6" width="2" height="1.6" fill="#48e048"/><rect x="25.6" y="26.6" width="2" height="1.6" fill="#f0a030"/><rect x="25.6" y="35.4" width="2" height="1.6" fill="#48e048"/><rect x="25.6" y="38.6" width="2" height="1.6" fill="#f0a030"/><path d="M1.4,10 L28.9,22.2 L56.8,12" stroke="#f4e8c0" stroke-width="0.9" fill="none"/></svg>
<span class="t" style="left:333.0px;top:264.42px;font-size:12.5px;line-height:12.5px;height:12.5px;color:#0b4a7f;font-weight:bold;transform:scaleX(1.0686);">PGRP0</span>
<div class="a" style="left:333px;top:278px;width:368px;height:2px;background-image:linear-gradient(90deg,#bdb9bd 50%,transparent 50%);background-size:4px 2px;"></div>
<div class="a" style="left:703px;top:278px;width:378px;height:2px;background-image:linear-gradient(90deg,#bdb9bd 50%,transparent 50%);background-size:4px 2px;"></div>
<div class="a" style="left:269px;top:321px;width:150px;height:38px;background:#eff7ff;"></div>
<div class="a" style="left:269px;top:360px;width:150px;height:38px;background:#eff7ff;"></div>
<div class="a" style="left:269px;top:399px;width:150px;height:51px;background:#eff7ff;"></div>
<div class="a" style="left:269px;top:451px;width:150px;height:26px;background:#eff7ff;"></div>
<svg class="a" style="left:271px;top:333px;" width="14" height="14" viewBox="0 0 14 14"><rect x="1" y="1" width="12" height="12" fill="#fdfefa"/><path d="M2,0.5 H13 M2,13.5 H13 M0.5,1 V13 M13.5,1 V13" stroke="#3f7d0c" stroke-width="1" stroke-dasharray="1 1" fill="none" shape-rendering="crispEdges"/><rect x="2" y="6" width="9" height="2" fill="#ff8f0a"/><polygon points="8,1.9 9,1.9 12.2,7 9,12.1 8,12.1 8.9,7" fill="#ff8f0a"/></svg>
<svg class="a" style="left:271px;top:372px;" width="14" height="14" viewBox="0 0 14 14"><rect x="1" y="1" width="12" height="12" fill="#fdfefa"/><path d="M2,0.5 H13 M2,13.5 H13 M0.5,1 V13 M13.5,1 V13" stroke="#3f7d0c" stroke-width="1" stroke-dasharray="1 1" fill="none" shape-rendering="crispEdges"/><rect x="2" y="6" width="9" height="2" fill="#ff8f0a"/><polygon points="8,1.9 9,1.9 12.2,7 9,12.1 8,12.1 8.9,7" fill="#ff8f0a"/></svg>
<svg class="a" style="left:271px;top:417px;" width="14" height="14" viewBox="0 0 14 14"><rect x="1" y="1" width="12" height="12" fill="#fdfefa"/><path d="M2,0.5 H13 M2,13.5 H13 M0.5,1 V13 M13.5,1 V13" stroke="#3f7d0c" stroke-width="1" stroke-dasharray="1 1" fill="none" shape-rendering="crispEdges"/><rect x="2" y="6" width="9" height="2" fill="#ff8f0a"/><polygon points="8,1.9 9,1.9 12.2,7 9,12.1 8,12.1 8.9,7" fill="#ff8f0a"/></svg>
<svg class="a" style="left:271px;top:457px;" width="14" height="14" viewBox="0 0 14 14"><rect x="1" y="1" width="12" height="12" fill="#fdfefa"/><path d="M2,0.5 H13 M2,13.5 H13 M0.5,1 V13 M13.5,1 V13" stroke="#3f7d0c" stroke-width="1" stroke-dasharray="1 1" fill="none" shape-rendering="crispEdges"/><rect x="2" y="6" width="9" height="2" fill="#ff8f0a"/><polygon points="8,1.9 9,1.9 12.2,7 9,12.1 8,12.1 8.9,7" fill="#ff8f0a"/></svg>
<span class="t" style="left:288.9px;top:328.69px;font-size:11px;line-height:11px;height:11px;color:#0a3d72;transform:scaleX(1.1696);">Configurer les</span>
<span class="t" style="left:288.9px;top:341.69px;font-size:11px;line-height:11px;height:11px;color:#0a3d72;transform:scaleX(1.1774);">groupes...</span>
<span class="t" style="left:288.9px;top:367.69px;font-size:11px;line-height:11px;height:11px;color:#0a3d72;transform:scaleX(1.1744);">Créer des unités</span>
<span class="t" style="left:288.9px;top:380.69px;font-size:11px;line-height:11px;height:11px;color:#0a3d72;transform:scaleX(1.1786);">utilisant un disque...</span>
<span class="t" style="left:288.9px;top:406.69px;font-size:11px;line-height:11px;height:11px;color:#0a3d72;transform:scaleX(1.1817);">Définir les propriétés</span>
<span class="t" style="left:288.9px;top:419.69px;font-size:11px;line-height:11px;height:11px;color:#0a3d72;transform:scaleX(1.1644);">du groupe d'unités</span>
<span class="t" style="left:288.9px;top:432.69px;font-size:11px;line-height:11px;height:11px;color:#0a3d72;transform:scaleX(1.1786);">utilisant un disque...</span>
<span class="t" style="left:288.9px;top:458.69px;font-size:11px;line-height:11px;height:11px;color:#0a3d72;transform:scaleX(1.1533);">Actualiser</span>
<div class="a" style="left:429px;top:342px;width:569px;height:179px;box-sizing:border-box;background:#eff7ff;border:1px solid #a5aac6;box-shadow:inset 0 0 0 1px #f7fbff;"></div>
<div class="a" style="left:440px;top:353px;width:547px;height:60px;background:#6ba5d1;"></div>
<span class="t" style="left:446.0px;top:359.69px;font-size:11px;line-height:11px;height:11px;color:#fff;font-weight:bold;transform:scaleX(1.2536);">Informations sur le groupe</span>
<div class="a" style="left:441px;top:377px;width:245px;height:17px;background:#f7f3f7;"></div>
<div class="a" style="left:687px;top:377px;width:299px;height:17px;background:#fff;"></div>
<span class="t" style="left:446.3px;top:379.69px;font-size:11px;line-height:11px;height:11px;color:#000;transform:scaleX(1.1500);">Nom de groupe</span>
<span class="t" style="left:692.5px;top:380.69px;font-size:11px;line-height:11px;height:11px;color:#000;transform:scaleX(0.9920);">PGRP0</span>
<div class="a" style="left:441px;top:395px;width:245px;height:17px;background:#f7f3f7;"></div>
<div class="a" style="left:687px;top:395px;width:299px;height:17px;background:#fff;"></div>
<span class="t" style="left:446.3px;top:397.69px;font-size:11px;line-height:11px;height:11px;color:#000;transform:scaleX(1.1667);">Type de groupe</span>
<span class="t" style="left:692.5px;top:398.69px;font-size:11px;line-height:11px;height:11px;color:#000;transform:scaleX(1.1512);">Groupe de bibliothèques</span>
<div class="a" style="left:440px;top:432px;width:547px;height:78px;background:#6ba5d1;"></div>
<span class="t" style="left:446.0px;top:438.69px;font-size:11px;line-height:11px;height:11px;color:#fff;font-weight:bold;transform:scaleX(1.2619);">Informations sur l'unité</span>
<div class="a" style="left:441px;top:456px;width:245px;height:17px;background:#f7f3f7;"></div>
<div class="a" style="left:687px;top:456px;width:299px;height:17px;background:#fff;"></div>
<span class="t" style="left:446.3px;top:458.69px;font-size:11px;line-height:11px;height:11px;color:#000;transform:scaleX(1.1443);">Bibliothèque</span>
<span class="t" style="left:692.5px;top:459.69px;font-size:11px;line-height:11px;height:11px;color:#000;transform:scaleX(1.0698);">STK L20</span>
<div class="a" style="left:441px;top:474px;width:245px;height:17px;background:#f7f3f7;"></div>
<div class="a" style="left:687px;top:474px;width:299px;height:17px;background:#fff;"></div>
<span class="t" style="left:446.3px;top:476.69px;font-size:11px;line-height:11px;height:11px;color:#000;transform:scaleX(1.1159);">Unité 1</span>
<span class="t" style="left:692.5px;top:477.69px;font-size:11px;line-height:11px;height:11px;color:#000;transform:scaleX(1.0823);">SEAGATE ULTRIUM06242-XXX</span>
<div class="a" style="left:441px;top:492px;width:245px;height:17px;background:#f7f3f7;"></div>
<div class="a" style="left:687px;top:492px;width:299px;height:17px;background:#fff;"></div>
<span class="t" style="left:446.3px;top:494.69px;font-size:11px;line-height:11px;height:11px;color:#000;transform:scaleX(1.1216);">Unité 2</span>
<span class="t" style="left:692.5px;top:495.69px;font-size:11px;line-height:11px;height:11px;color:#000;transform:scaleX(1.0823);">SEAGATE ULTRIUM06242-XXX</span>
<svg class="a" style="left:0;top:0" width="1111" height="642" viewBox="0 0 1111 642"><line x1="138.8" y1="150.3" x2="667" y2="462.3" stroke="#000" stroke-width="1" shape-rendering="crispEdges"/><polygon points="131.1,144.7 141.9,146.4 139.2,149.3 136.4,153.9" fill="#000"/><polygon points="137.9,150.2 139.3,148 144.1,151.8 143.5,152.7" fill="#000"/><polygon points="673.9,466.6 668.6,457.1 666.9,461.3 663.6,464.8" fill="#000"/><polygon points="666.5,462.7 667.9,460.5 662.3,458 661.7,459" fill="#000"/></svg>
</div>
</body>
</html>
